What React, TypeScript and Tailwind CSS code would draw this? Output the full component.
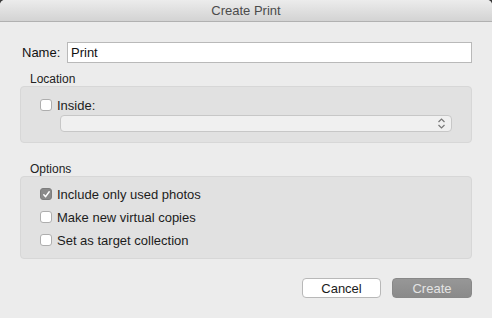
import React from "react";

function Check({ checked = false }: { checked?: boolean }) {
  return checked ? (
    <div className="w-[12px] h-[12px] rounded-[3px] bg-[#8a8a8a] border border-[#7d7d7d] flex items-center justify-center shrink-0">
      <svg width="9" height="9" viewBox="0 0 9 9">
        <path d="M1.8 4.8 L3.6 6.6 L7.2 1.8" fill="none" stroke="#ffffff" strokeWidth="1.5" strokeLinecap="round" strokeLinejoin="round" />
      </svg>
    </div>
  ) : (
    <div className="w-[12px] h-[12px] rounded-[3px] bg-white border border-[#aeaeae] shrink-0" />
  );
}

function Row({ checked, label }: { checked?: boolean; label: string }) {
  return (
    <div className="flex items-center h-[12px] gap-[5px]">
      <Check checked={checked} />
      <span className="text-[13px] leading-none text-[#1c1c1c]">{label}</span>
    </div>
  );
}

export default function App() {
  return (
    <div className="w-[492px] h-[318px] bg-[#3a3a3a]" style={{ fontFamily: '"Liberation Sans", Arial, sans-serif' }}>
      <div className="w-full h-full bg-[#ececec] rounded-t-[5px] overflow-hidden flex flex-col">
        <div className="h-[22px] shrink-0 bg-gradient-to-b from-[#ececec] to-[#d3d3d3] border-b border-[#b1b1b1] flex items-center justify-center">
          <span className="text-[13px] text-[#4b4b4b] leading-none">Create Print</span>
        </div>
        <div className="flex flex-col px-[20px]">
          <div className="flex items-center mt-[20px] h-[21px]">
            <span className="ml-[2px] w-[45px] text-[13px] text-[#111] leading-none">Name:</span>
            <div className="flex-1 h-[21px] bg-white border border-[#b9b9b9] flex items-center pl-[3px]">
              <span className="text-[13px] leading-none text-[#111]">Print</span>
            </div>
          </div>
          <div className="mt-[10px] ml-[10px] h-[13px] text-[12px] leading-none text-[#222]">Location</div>
          <div className="h-[57px] rounded-[4px] bg-[#e1e1e1] border border-[#d7d7d7] flex flex-col pl-[19px] pt-[12px]">
            <Row label="Inside:" />
            <div className="mt-[4px] ml-[20px] w-[392px] h-[17px] rounded-[4px] bg-[#f0f0f0] border border-[#c7c7c7] flex items-center justify-end pr-[5px]">
              <svg width="9" height="13" viewBox="0 0 9 13">
                <path d="M1.5 5 L4.5 2 L7.5 5" fill="none" stroke="#777" strokeWidth="1.2" />
                <path d="M1.5 8 L4.5 11 L7.5 8" fill="none" stroke="#777" strokeWidth="1.2" />
              </svg>
            </div>
          </div>
          <div className="mt-[20px] ml-[10px] h-[13px] text-[12px] leading-none text-[#222]">Options</div>
          <div className="h-[83px] rounded-[4px] bg-[#e1e1e1] border border-[#d7d7d7] flex flex-col gap-[11px] pl-[19px] pt-[11px]">
            <Row checked label="Include only used photos" />
            <Row label="Make new virtual copies" />
            <Row label="Set as target collection" />
          </div>
          <div className="mt-[19px] flex justify-end gap-[11px]">
            <div className="w-[79px] h-[20px] rounded-[4px] bg-white border border-[#b8b8b8] flex items-center justify-center text-[13px] leading-none text-[#1a1a1a]">Cancel</div>
            <div className="w-[80px] h-[20px] rounded-[4px] bg-gradient-to-b from-[#979797] to-[#8a8a8a] border border-[#888] flex items-center justify-center text-[13px] leading-none text-[#e4e4e4]">Create</div>
          </div>
        </div>
      </div>
    </div>
  );
}
